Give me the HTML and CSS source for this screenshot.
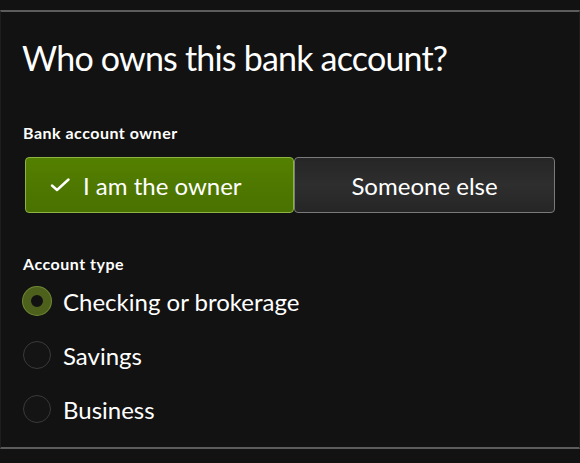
FILE: index.html
```html
<!DOCTYPE html>
<html lang="en">
<head>
    <meta charset="UTF-8">
    <title>Bank account owner</title>
    <link rel="stylesheet" href="styles.css">
</head>
<body>

    <div class="panel">
        <h1 class="title">Who owns this bank account?</h1>

        <!-- Owner toggle -->
        <div class="field-label">Bank account owner</div>
        <div class="toggle">
            <button class="toggle-btn selected">
                <svg class="check" width="20" height="14" viewBox="0 0 20 14">
                    <path d="M2 7.5 L7 12 L18.5 1.5" fill="none" stroke="#fff" stroke-width="2.4" stroke-linecap="round" stroke-linejoin="round"/>
                </svg>
                I am the owner
            </button>
            <button class="toggle-btn other">Someone else</button>
        </div>

        <!-- Account type -->
        <div class="field-label type-label">Account type</div>
        <div class="radio-list">
            <label class="radio-row">
                <span class="radio checked"></span>
                Checking or brokerage
            </label>
            <label class="radio-row">
                <span class="radio"></span>
                Savings
            </label>
            <label class="radio-row">
                <span class="radio"></span>
                Business
            </label>
        </div>
    </div>

</body>
</html>
```

FILE: styles.css
```css
body {
    font-family: 'Lato', 'Open Sans', sans-serif;
    margin: 0;
    background-color: #121212;
    color: #fff;
}

/* Panel between the two rules */
.panel {
    margin-top: 10px;
    border-top: 2px solid #5c5c5c;
    border-bottom: 2px solid #5c5c5c;
    border-left: 1px solid #1e1e1e;
    border-right: 1px solid #1e1e1e;
    padding: 0 24px 0 22px;
    height: 439px;
    box-sizing: border-box;
}

.title {
    font-size: 34px;
    font-weight: 400;
    margin: 0 0 0 -1px;
    padding-top: 24px;
    line-height: 43px;
    letter-spacing: -0.8px;
}

.field-label {
    font-size: 16px;
    font-weight: 700;
    margin-top: 44px;
    line-height: 20px;
    letter-spacing: 0.5px;
}

/* Toggle buttons */
.toggle {
    display: flex;
    margin-top: 14px;
    margin-left: 2px;
}

.toggle-btn {
    width: 262px;
    height: 56px;
    border-radius: 4px;
    border: 1px solid #7a7a7a;
    background: linear-gradient(#262626, #2e2e2e 50%, #262626);
    color: #fff;
    font-family: 'Lato', 'Open Sans', sans-serif;
    font-size: 24px;
    display: flex;
    align-items: center;
    justify-content: center;
    gap: 13px;
    padding: 0;
}

.toggle-btn.selected {
    width: 270px;
    justify-content: flex-start;
    padding-left: 24px;
    background: linear-gradient(#548000, #4e7800 50%, #4a7200);
    border-color: #8db443;
}

.type-label {
    margin-top: 41px;
}

/* Radios */
.radio-list {
    display: flex;
    flex-direction: column;
    gap: 26px;
    margin-top: 13px;
}

.radio-row {
    display: flex;
    align-items: center;
    gap: 12px;
    font-size: 24px;
    height: 28px;
}

.radio {
    width: 28px;
    height: 28px;
    box-sizing: border-box;
    border-radius: 50%;
    border: 1px solid #3a3a3a;
    background: #141414;
}

.radio.checked {
    border: 8.5px solid #4e611c;
    background: #121212;
    box-shadow: 0 0 0 1px #6f8a35;
}
```
